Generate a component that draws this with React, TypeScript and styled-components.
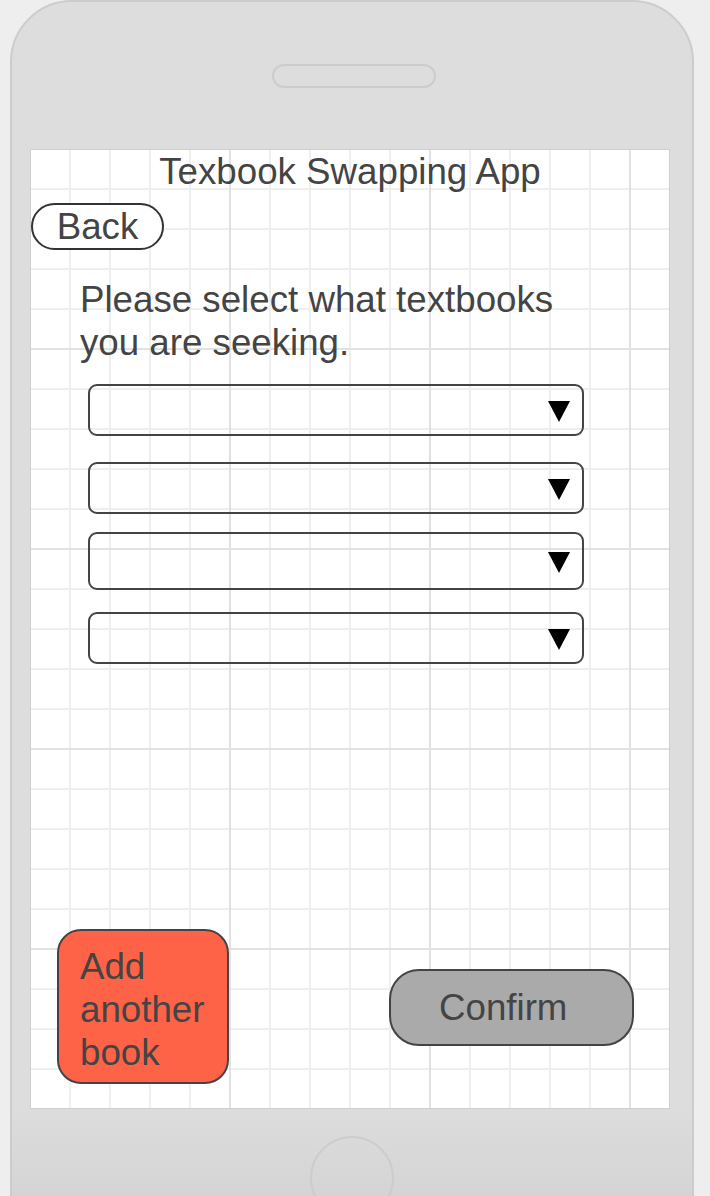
import React from "react"
import styled, { createGlobalStyle } from "styled-components"

const GlobalStyle = createGlobalStyle`
  html, body {
    margin: 0;
    padding: 0;
    background: #eeeeee;
    font-family: "Liberation Sans", Arial, sans-serif;
  }
`

const Page = styled.div`
  height: 1196px;
  overflow: hidden;
  padding-left: 10px;
`

const Phone = styled.div`
  width: 680px;
  height: 1240px;
  border: 2px solid #cccccc;
  border-radius: 62px 62px 0 0;
  background: linear-gradient(to bottom, #dddddd 0, #dddddd 1100px, #d0d0d0 1240px);
  display: flex;
  flex-direction: column;
  align-items: center;
`

const Speaker = styled.div`
  margin: 62px 0 0 4px;
  width: 160px;
  height: 20px;
  border: 2px solid #cccccc;
  border-radius: 12px;
`

const Screen = styled.div`
  align-self: flex-start;
  margin: 61px 0 0 18px;
  width: 638px;
  height: 958px;
  border: 1px solid #cfcfcf;
  background-color: #ffffff;
  background-image:
    linear-gradient(to right, #e2e2e2 2px, transparent 2px),
    linear-gradient(to bottom, #e2e2e2 2px, transparent 2px),
    linear-gradient(to right, #efefef 2px, transparent 2px),
    linear-gradient(to bottom, #efefef 2px, transparent 2px);
  background-size: 200px 200px, 200px 200px, 40px 40px, 40px 40px;
  background-position: -2px -2px;
  display: flex;
  flex-direction: column;
  color: #444444;
  font-size: 36.7px;
  line-height: 43px;
`

const Title = styled.div`
  text-align: center;
`

const BackButton = styled.div`
  box-sizing: border-box;
  margin-top: 10px;
  width: 133px;
  height: 47px;
  border: 2px solid #333333;
  border-radius: 24px;
  background: #ffffff;
  display: flex;
  align-items: center;
  justify-content: center;
`

const Prompt = styled.div`
  margin: 28px 0 0 49px;
`

const SelectList = styled.div`
  margin: 20px 0 0 57px;
  display: flex;
  flex-direction: column;
`

const Select = styled.div<{ $h: number; $gap: number }>`
  box-sizing: border-box;
  width: 496px;
  height: ${(p) => p.$h}px;
  margin-top: ${(p) => p.$gap}px;
  border: 2px solid #444444;
  border-radius: 9px;
  display: flex;
  align-items: center;
  justify-content: flex-end;
  padding-right: 12px;
  svg {
    margin-top: 3px;
  }
`

const BottomRow = styled.div`
  margin-top: auto;
  padding: 0 35px 24px 26px;
  display: flex;
  justify-content: space-between;
  align-items: flex-start;
`

const AddButton = styled.div`
  box-sizing: border-box;
  width: 172px;
  height: 155px;
  padding: 14px 0 0 21px;
  background: #fe6347;
  border: 2px solid #444444;
  border-radius: 24px;
`

const ConfirmButton = styled.div`
  box-sizing: border-box;
  margin-top: 40px;
  width: 245px;
  height: 77px;
  padding-left: 48px;
  background: #aaaaaa;
  border: 2px solid #444444;
  border-radius: 30px;
  display: flex;
  align-items: center;
`

const HomeButton = styled.div`
  margin-top: 27px;
  width: 80px;
  height: 80px;
  border: 2px solid #cccccc;
  border-radius: 50%;
`

const Arrow = () => (
  <svg width="22" height="21" viewBox="0 0 22 21">
    <polygon points="0,0 22,0 11,21" fill="#000000" />
  </svg>
)

const selects = [
  { h: 52, gap: 0 },
  { h: 52, gap: 26 },
  { h: 58, gap: 18 },
  { h: 52, gap: 22 },
]

export default function App() {
  return (
    <Page>
      <GlobalStyle />
      <Phone>
        <Speaker />
        <Screen>
          <Title>Texbook Swapping App</Title>
          <BackButton>Back</BackButton>
          <Prompt>
            Please select what textbooks
            <br />
            you are seeking.
          </Prompt>
          <SelectList>
            {selects.map((s, i) => (
              <Select key={i} $h={s.h} $gap={s.gap}>
                <Arrow />
              </Select>
            ))}
          </SelectList>
          <BottomRow>
            <AddButton>Add another book</AddButton>
            <ConfirmButton>Confirm</ConfirmButton>
          </BottomRow>
        </Screen>
        <HomeButton />
      </Phone>
    </Page>
  )
}
